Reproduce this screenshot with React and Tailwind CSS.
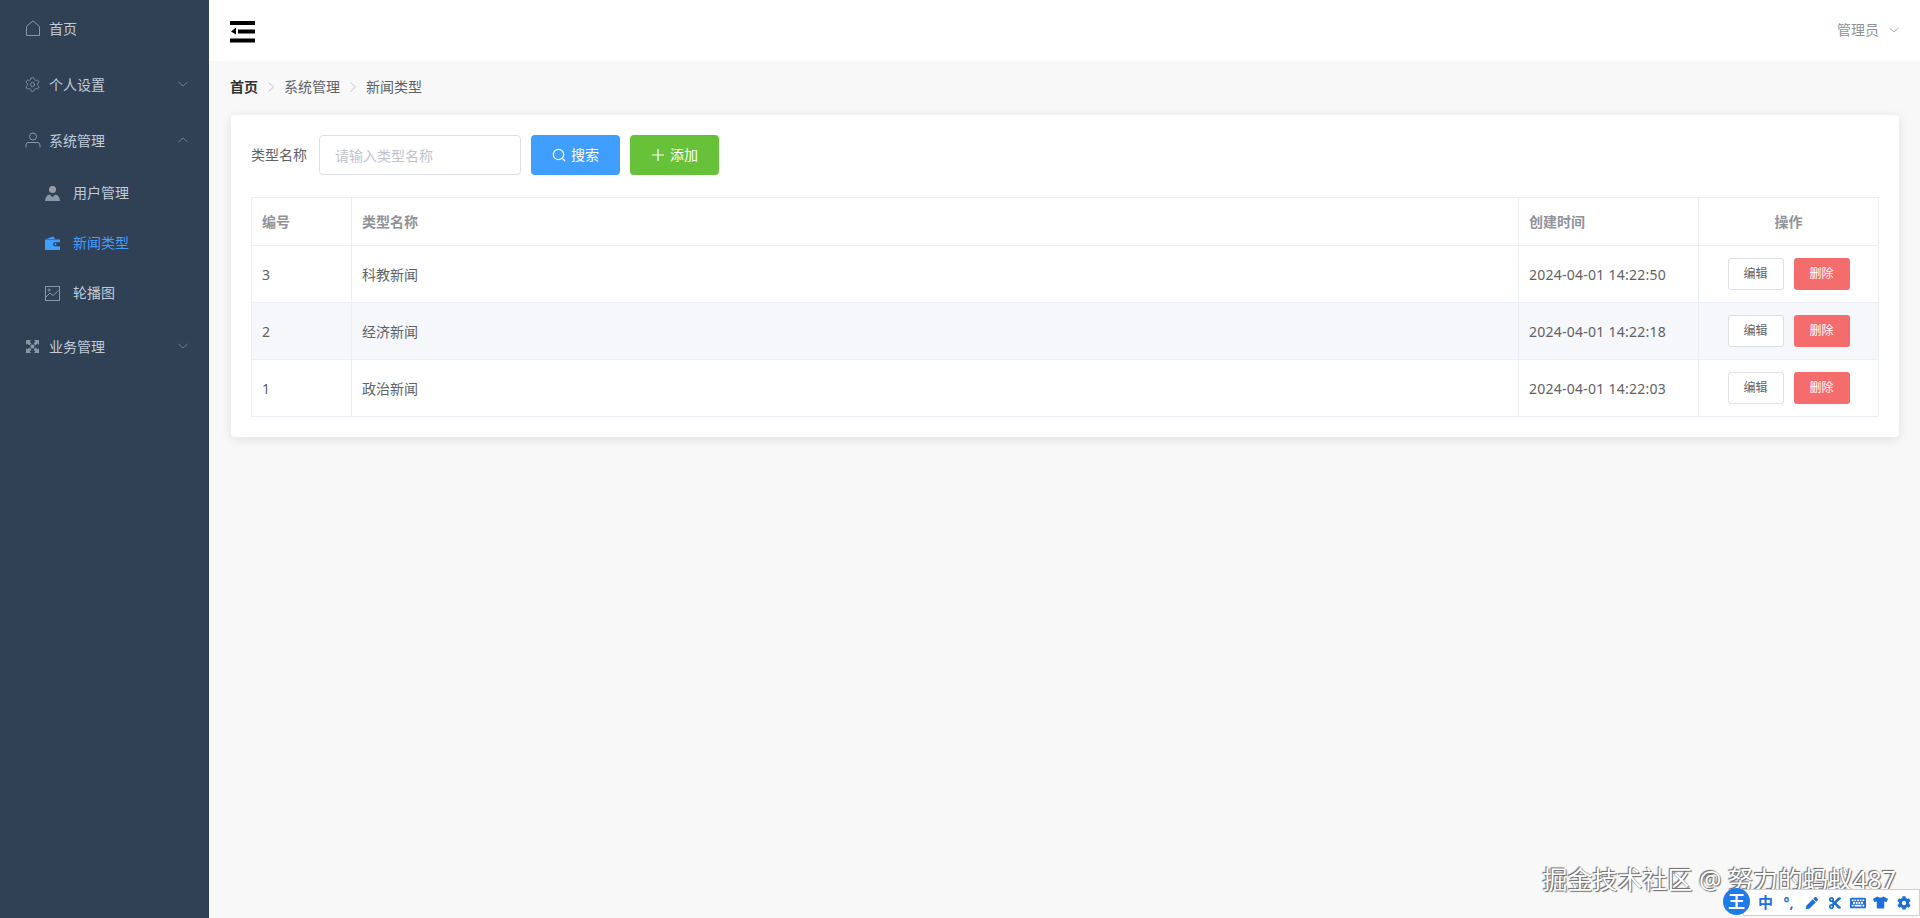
import { FaCut, FaKeyboard, FaTshirt, FaCog, FaPen } from 'react-icons/fa';
import { Settings } from 'lucide-react';

const fontStack = "font-['Noto_Sans','Noto_Sans_CJK_SC',sans-serif]";

const HomeIcon = () => (
  <svg width="16" height="16" viewBox="0 0 16 16" fill="none" stroke="currentColor" strokeWidth="1">
    <path d="M1.500 6.500 8 .8l6.500 5.700V15.500h-13z" />
  </svg>
);
const UserIcon = () => (
  <svg width="16" height="16" viewBox="0 0 16 16" fill="none" stroke="currentColor" strokeWidth="1">
    <circle cx="8" cy="4.500" r="3.500" />
    <path d="M1 15.500v-2C1 11 2.500 10.500 4 10.500h8c1.500 0 3 .5 3 3v2" />
  </svg>
);
const ExpandIcon = () => (
  <svg width="13" height="13" viewBox="0 0 14 14" fill="currentColor">
    <path d="M0 0h5.500L3.900 1.600 5.800 3.500 3.500 5.800 1.600 3.900 0 5.500zM14 0v5.500l-1.600-1.600-1.900 1.900-2.300-2.300 1.900-1.900L8.500 0zM0 14V8.500l1.600 1.600 1.900-1.900 2.300 2.300-1.900 1.900L5.500 14zM14 14H8.500l1.600-1.600-1.900-1.900 2.300-2.300 1.900 1.900L14 8.500z" />
    <rect x="5" y="5" width="4" height="4" />
  </svg>
);
const PersonFill = () => (
  <svg width="15" height="15" viewBox="0 0 15 15" fill="currentColor">
    <circle cx="7.500" cy="3.600" r="3.500" fill="#9a9ca3" />
    <path d="M0 15c.3-3.500 1.500-6 4.500-6.500L7.500 11l3-2.500c3 .5 4.200 3 4.500 6.500z" />
  </svg>
);
const WalletFill = () => (
  <svg width="15" height="14" viewBox="0 0 15 14" fill="#409eff">
    <path d="M1 3 8.500.500 10 3z" />
    <path d="M0 3.500h15v2.800H10a2 2 0 0 0 0 4h5V14H0z" />
    <circle cx="10.500" cy="8.300" r="1" />
  </svg>
);
const PictureIcon = () => (
  <svg width="15" height="15" viewBox="0 0 15 15" fill="none" stroke="currentColor" strokeWidth="1">
    <rect x=".5" y=".5" width="14" height="14" />
    <path d="m1 11 4-4 3 2.500 5.500-5" />
    <circle cx="4" cy="4" r="1" />
  </svg>
);
const Chevron = ({ up, className = '' }) => (
  <svg width="12" height="12" viewBox="0 0 12 12" fill="none" stroke="currentColor" strokeWidth="1" className={className}>
    <path d={up ? 'M1.500 8 6 4l4.500 4' : 'M1.500 4 6 8l4.500-4'} />
  </svg>
);
const Sep = () => (
  <svg width="8" height="12" viewBox="0 0 8 12" fill="none" stroke="#c0c4cc" strokeWidth="1" className="mx-[9px]">
    <path d="m1.500 1.500 5 4.500-5 4.500" />
  </svg>
);

const MenuItem = ({ icon, label, arrow }) => (
  <div className="flex items-center h-14 pl-[24px] pr-[20px] text-[#bfcbd9]">
    <span className="w-[17px] flex justify-center text-[#8a97a6]">{icon}</span>
    <span className="ml-[8px] pt-[2px] flex-1 text-sm">{label}</span>
    {arrow && <Chevron up={arrow === 'up'} className="text-[#6f7f92]" />}
  </div>
);

const SubItem = ({ icon, label, active }) => (
  <div className={`flex items-center h-[50px] pl-[45px] ${active ? 'text-[#409eff]' : 'text-[#bfcbd9]'}`}>
    <span className="w-[15px] flex justify-center text-[#8a97a6]">{icon}</span>
    <span className="ml-[13px] text-sm">{label}</span>
  </div>
);

const rows = [
  { id: 3, name: '科教新闻', time: '2024-04-01 14:22:50' },
  { id: 2, name: '经济新闻', time: '2024-04-01 14:22:18', striped: true },
  { id: 1, name: '政治新闻', time: '2024-04-01 14:22:03' },
];

export default function App() {
  return (
    <div className={`relative flex h-[918px] overflow-hidden bg-[#f8f8f8] ${fontStack}`}>
      <aside className="w-[209px] shrink-0 bg-[#304156]">
        <MenuItem icon={<HomeIcon />} label="首页" />
        <MenuItem icon={<Settings size={17} strokeWidth={1.2} />} label="个人设置" arrow="down" />
        <MenuItem icon={<UserIcon />} label="系统管理" arrow="up" />
        <SubItem icon={<PersonFill />} label="用户管理" />
        <SubItem icon={<WalletFill />} label="新闻类型" active />
        <SubItem icon={<PictureIcon />} label="轮播图" />
        <MenuItem icon={<ExpandIcon />} label="业务管理" arrow="down" />
      </aside>

      <div className="flex-1 min-w-0">
        <header className="h-[61px] bg-white flex items-center justify-between pl-[21px] pr-[20px]">
          <svg width="25" height="22" viewBox="0 0 25 22" fill="#000" className="mt-[3px]">
            <rect x="0" y="0" width="25" height="4" />
            <rect x="8" y="8.500" width="17" height="4" />
            <rect x="0" y="17.500" width="25" height="4" />
            <path d="M6 6.500v7L1 10.500z" />
          </svg>
          <div className="flex items-center text-sm text-[#909399] -mt-px">
            <span>管理员</span>
            <Chevron className="ml-[9px] text-[#b0b3b8]" />
          </div>
        </header>

        <main className="pl-[22px] pr-[21px]">
          <nav className="h-[51px] mb-[3px] -ml-px flex items-center text-sm text-[#606266]">
            <span className="font-bold text-[#303133]">首页</span>
            <Sep />
            <span>系统管理</span>
            <Sep />
            <span>新闻类型</span>
          </nav>

          <section className="bg-white rounded-[4px] p-[20px] shadow-[0_2px_12px_rgba(0,0,0,0.1)]">
            <div className="flex items-center h-10 mb-[22px] text-sm">
              <span className="text-[#606266] mr-[12px]">类型名称</span>
              <input
                placeholder="请输入类型名称"
                className="w-[202px] h-10 px-[15px] bg-white border border-[#dcdfe6] rounded-[4px] text-sm outline-none placeholder:text-[#c0c4cc]"
              />
              <button className="ml-[10px] w-[89px] h-10 rounded-[4px] bg-[#409eff] text-white flex items-center justify-center gap-[5px]">
                <svg width="14" height="14" viewBox="0 0 14 14" fill="none" stroke="currentColor" strokeWidth="1.200">
                  <circle cx="6.500" cy="6.500" r="5.200" />
                  <path d="m10.500 10.500 2.500 2.500" />
                </svg>
                搜索
              </button>
              <button className="ml-[10px] w-[89px] h-10 rounded-[4px] bg-[#67c23a] text-white flex items-center justify-center gap-[5px]">
                <svg width="14" height="14" viewBox="0 0 14 14" fill="none" stroke="currentColor" strokeWidth="1.200">
                  <path d="M7 1v12M1 7h12" />
                </svg>
                添加
              </button>
            </div>

            <table className="w-full table-fixed border-collapse text-sm text-[#606266]">
              <colgroup>
                <col className="w-[100px]" />
                <col />
                <col className="w-[180px]" />
                <col className="w-[180px]" />
              </colgroup>
              <thead>
                <tr className="h-[48px] text-[#909399] font-bold">
                  <th className="border border-[#ebeef5] px-[10px] text-left">编号</th>
                  <th className="border border-[#ebeef5] px-[10px] text-left">类型名称</th>
                  <th className="border border-[#ebeef5] px-[10px] text-left">创建时间</th>
                  <th className="border border-[#ebeef5] px-[10px] text-center">操作</th>
                </tr>
              </thead>
              <tbody>
                {rows.map((r) => (
                  <tr key={r.id} className={`h-[57px] ${r.striped ? 'bg-[#f5f7fa]' : ''}`}>
                    <td className="border border-[#ebeef5] px-[10px] pt-px">{r.id}</td>
                    <td className="border border-[#ebeef5] px-[10px] pt-px">{r.name}</td>
                    <td className="border border-[#ebeef5] px-[10px] pt-px tracking-[0.25px] whitespace-nowrap">{r.time}</td>
                    <td className="border border-[#ebeef5] px-[10px]">
                      <div className="flex justify-center gap-[10px] text-xs">
                        <button className="w-[56px] h-8 rounded-[3px] bg-white border border-[#dcdfe6] text-[#606266]">编辑</button>
                        <button className="w-[56px] h-8 rounded-[3px] bg-[#f56c6c] text-white">删除</button>
                      </div>
                    </td>
                  </tr>
                ))}
              </tbody>
            </table>
          </section>
        </main>
      </div>

      {/* screenshot watermark and IME toolbar, both float over the page */}
      <div className="absolute right-[24px] top-[869px] text-[25px] leading-[20px] text-white whitespace-nowrap [text-shadow:-1px_-1px_1px_#666,1px_1px_1px_#666]">
        掘金技术社区 @ 努力的蚂蚁487
      </div>
      <div className="absolute left-[1723px] top-[889px] w-[197px] h-[27px] flex items-center">
        <div className="absolute left-[20px] right-0 top-0 bottom-0 bg-white border border-[#b8d4f5]" />
        <div className="relative w-[27px] h-[27px] -mt-[3px] rounded-full bg-[#1e7be8] text-white flex items-center justify-center">
          <span className="text-[17px] font-bold leading-none">王</span>
        </div>
        <div className="relative flex items-center text-[#1e6fd9] ml-[4px]">
          <span className="w-[23px] flex justify-center text-[15px] font-bold leading-none">中</span>
          <span className="w-[23px] flex justify-center text-[14px] font-bold leading-none">°,</span>
          <span className="w-[23px] flex justify-center"><FaPen size={12} /></span>
          <span className="w-[23px] flex justify-center"><FaCut size={14} /></span>
          <span className="w-[23px] flex justify-center"><FaKeyboard size={16} /></span>
          <span className="w-[23px] flex justify-center"><FaTshirt size={15} /></span>
          <span className="w-[23px] flex justify-center"><FaCog size={14} /></span>
        </div>
      </div>
    </div>
  );
}
